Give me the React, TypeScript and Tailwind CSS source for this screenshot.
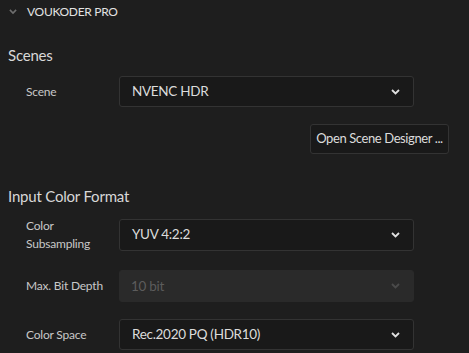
const FONT = "font-['Lato','Noto_Sans',sans-serif]";

function Chevron({ className, w = 9 }: { className?: string; w?: number }) {
  return (
    <svg width={w} height={(w * 2) / 3} viewBox="0 0 9 6" className={className} fill="none">
      <path d="M1 1l3.5 3.5L8 1" stroke="currentColor" strokeWidth="1.8" />
    </svg>
  );
}

function Select({
  value,
  disabled,
  h = "h-[32px]",
}: {
  value: string;
  disabled?: boolean;
  h?: string;
}) {
  return (
    <div
      className={
        disabled
          ? `w-[295px] ${h} rounded-[3px] bg-[#2a2a2a] border border-[#2a2a2a] flex items-center justify-between pl-[11px] pr-[13px] text-[#5c5c5c]`
          : `w-[295px] ${h} rounded-[3px] bg-[#191919] border border-[#333333] flex items-center justify-between pl-[12px] pr-[13px] text-[#dcdcdc]`
      }
    >
      <span className="text-[13.5px] tracking-[-0.3px]">{value}</span>
      <Chevron className={disabled ? "text-[#4a4a4a]" : "text-[#e0e0e0]"} />
    </div>
  );
}

function Row({
  label,
  children,
  className,
}: {
  label: React.ReactNode;
  children: React.ReactNode;
  className?: string;
}) {
  return (
    <div className={`flex items-center ${className ?? ""}`}>
      <div className="w-[119px] pl-[26px] text-[12px] leading-[17.5px] text-[#c8c8c8] tracking-[-0.2px]">
        {label}
      </div>
      {children}
    </div>
  );
}

export default function App() {
  return (
    <div className={`w-[469px] h-[353px] overflow-hidden bg-[#1e1e1e] ${FONT}`}>
      <div className="h-[24px] flex items-center pl-[9px] gap-[10px]">
        <Chevron className="text-[#6e6e6e]" w={8} />
        <span className="text-[12px] text-[#e2e2e2] tracking-[-0.3px]">VOUKODER PRO</span>
      </div>

      <div className="mt-[19px] h-[24px] leading-[24px] pl-[8px] text-[15px] text-[#d8d8d8] tracking-[-0.2px]">
        Scenes
      </div>
      <Row label="Scene" className="mt-[9px]">
        <Select value="NVENC HDR" h="h-[31px]" />
      </Row>
      <div className="mt-[17px] flex justify-end pr-[20px]">
        <button className="h-[30px] w-[139px] rounded-[3px] bg-[#191919] border border-[#333333] text-[13px] tracking-[-0.4px] whitespace-nowrap text-[#dcdcdc]">
          Open Scene Designer ...
        </button>
      </div>

      <div className="mt-[30px] h-[24px] leading-[24px] pl-[8px] text-[15px] text-[#d8d8d8] tracking-[-0.2px]">
        Input Color Format
      </div>
      <Row
        label={
          <>
            Color
            <br />
            Subsampling
          </>
        }
        className="mt-[9px]"
      >
        <Select value="YUV 4:2:2" />
      </Row>
      <Row label="Max. Bit Depth" className="mt-[18px]">
        <Select value="10 bit" disabled />
      </Row>
      <Row label="Color Space" className="mt-[17px]">
        <Select value="Rec.2020 PQ (HDR10)" h="h-[31px]" />
      </Row>
    </div>
  );
}
